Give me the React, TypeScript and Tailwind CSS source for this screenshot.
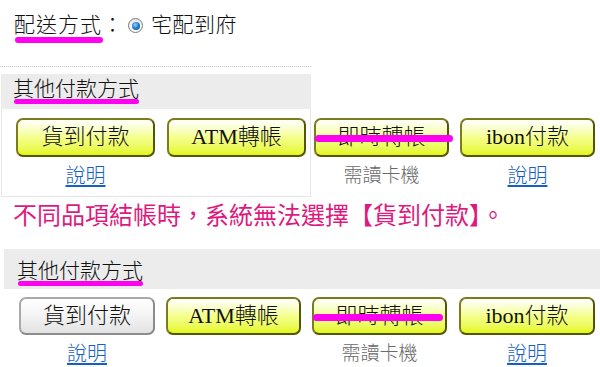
const serif = "font-['Liberation_Serif','Noto_Sans_CJK_TC',serif] font-light";

type Pay = { label: string; w: string; gray?: boolean; strike?: string; note?: "link" | "card" };

function PayButton({ p }: { p: Pay }) {
  const face = p.gray
    ? "border-[#a9a9a9] border-b-[#8c8c8c] border-r-[#8c8c8c] from-[#ffffff] via-[#f3f3f3] to-[#e2e2e2]"
    : "border-[#7c7c1c] border-b-[#55550a] border-r-[#55550a] from-[#ffffff] via-[#f5ff8c] to-[#e4f700]";
  return (
    <div className={`relative flex h-full items-center justify-center rounded-[7px] border-2 bg-linear-to-b ${face} text-[22px] leading-none text-[#111]`}>
      <span className="pb-[1px]">{p.label}</span>
      {p.strike && <span className={`absolute left-[-1px] top-[15px] h-[7px] rounded-full bg-[#ff00f0] ${p.strike}`} />}
    </div>
  );
}

function Note({ kind }: { kind?: "link" | "card" }) {
  if (kind === "link") return <span className="text-[20px] leading-[22px] text-[#1560c8] underline underline-offset-2">說明</span>;
  if (kind === "card") return <span className="text-[19px] leading-[22px] text-[#6a6a6a]">需讀卡機</span>;
  return <span className="h-[22px]" />;
}

function PayRow({ items, gaps, h }: { items: Pay[]; gaps: string[]; h: string }) {
  return (
    <div className="flex">
      {items.map((p, i) => (
        <div key={p.label} className={`flex shrink-0 flex-col items-center gap-[8px] ${p.w} ${gaps[i]}`}>
          <div className={`w-full ${h}`}>
            <PayButton p={p} />
          </div>
          <Note kind={p.note} />
        </div>
      ))}
    </div>
  );
}

function Heading() {
  return (
    <span className="relative inline-block text-[21px] leading-[24px] text-[#111]">
      其他付款方式
      <span className="absolute bottom-[-3px] left-[1px] right-0 h-[5px] rounded-full bg-[#ff00f0]" />
    </span>
  );
}

export default function App() {
  return (
    <div className={`relative h-[367px] w-[600px] overflow-hidden bg-white ${serif}`}>
      <div className="flex h-[66px] items-start pl-[14px] pt-[12px] text-[21px] leading-[26px] text-[#111]">
        <span className="relative tracking-[1px]">
          配送方式
          <span className="absolute bottom-[-5px] left-[1px] right-[-1px] h-[6px] rounded-full bg-[#ff00f0]" />
        </span>
        <span className="w-[26px]">：</span>
        <span className="mr-[8px] mt-[6px] flex h-[15px] w-[15px] items-center justify-center rounded-full border border-[#7a7a7a] bg-linear-to-b from-[#e8e8e8] to-[#ffffff]">
          <span className="h-[8px] w-[8px] rounded-full bg-radial-[at_40%_35%] from-[#8fd0ff] via-[#1d7fd0] to-[#0b3f80]" />
        </span>
        <span className="tracking-[0.5px]">宅配到府</span>
      </div>

      <div className="w-[311px] border-t border-dotted border-[#c4c4c4]" />

      <div className="ml-[1px] mt-[7px] w-[310px]">
        <div className="flex h-[35px] items-end bg-[#ececec] pb-[8px] pl-[12px]">
          <Heading />
        </div>
        <div className="h-[88px] border-x border-b border-[#e6e6e6] pt-[9px]">
          <PayRow
            h="h-[39px]"
            gaps={["ml-[14px]", "ml-[12px]", "ml-[8px]", "ml-[11px]"]}
            items={[
              { label: "貨到付款", w: "w-[139px]", note: "link" },
              { label: "ATM轉帳", w: "w-[139px]" },
              { label: "即時轉帳", w: "w-[135px]", note: "card", strike: "w-[138px]" },
              { label: "ibon付款", w: "w-[135px]", note: "link" },
            ]}
          />
        </div>
      </div>

      <p className="mt-[4px] pl-[13px] font-['Noto_Sans_CJK_TC',sans-serif] text-[24px] font-normal leading-[26px] text-[#de1a7e]">
        不同品項結帳時，系統無法選擇【貨到付款】。
      </p>

      <div className="ml-[4px] mt-[22px] flex h-[40px] items-end bg-[#ececec] pb-[6px] pl-[13px]">
        <Heading />
      </div>
      <div className="pt-[8px]">
        <PayRow
          h="h-[38px]"
          gaps={["ml-[19px]", "ml-[11px]", "ml-[11px]", "ml-[12px]"]}
          items={[
            { label: "貨到付款", w: "w-[136px]", gray: true, note: "link" },
            { label: "ATM轉帳", w: "w-[135px]" },
            { label: "即時轉帳", w: "w-[135px]", note: "card", strike: "w-[130px]" },
            { label: "ibon付款", w: "w-[136px]", note: "link" },
          ]}
        />
      </div>
    </div>
  );
}
